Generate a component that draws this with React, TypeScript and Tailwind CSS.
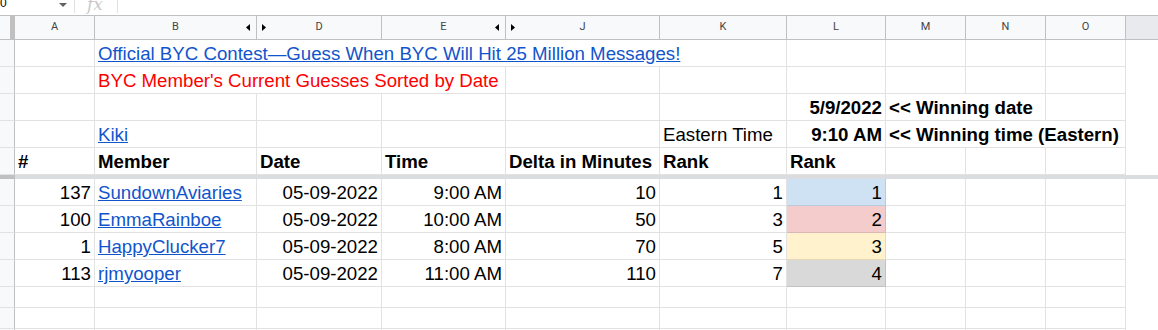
import React from 'react';

type C = {
  t?: string;
  r?: boolean;
  b?: boolean;
  link?: boolean;
  red?: boolean;
  span?: string;
  bg?: string;
};

const GRID =
  'grid grid-cols-[15px_80px_162px_125px_124px_154px_127px_99px_80px_80px_80px_1fr]';

const top: C[][] = [
  [
    {},
    { t: 'Official BYC Contest\u2014Guess When BYC Will Hit 25 Million Messages!', link: true, span: 'col-span-5' },
    {},
    {},
    {},
    {},
  ],
  [
    {},
    { t: "BYC Member's Current Guesses Sorted by Date", red: true, span: 'col-span-3' },
    {},
    {},
    {},
    {},
    {},
    {},
  ],
  [
    {},
    {},
    {},
    {},
    {},
    {},
    { t: '5/9/2022', r: true, b: true },
    { t: '<< Winning date', b: true, span: 'col-span-2' },
    {},
  ],
  [
    {},
    { t: 'Kiki', link: true },
    {},
    {},
    {},
    { t: 'Eastern Time' },
    { t: '9:10 AM', r: true, b: true },
    { t: '<< Winning time (Eastern)', b: true, span: 'col-span-3' },
  ],
  [
    { t: '#', b: true },
    { t: 'Member', b: true },
    { t: 'Date', b: true },
    { t: 'Time', b: true },
    { t: 'Delta in Minutes', b: true },
    { t: 'Rank', b: true },
    { t: 'Rank', b: true },
    {},
    {},
    {},
  ],
];

const guesses = [
  { n: '137', member: 'SundownAviaries', date: '05-09-2022', time: '9:00 AM', delta: '10', rank: '1', r2: '1', bg: 'bg-[#cfe2f3]' },
  { n: '100', member: 'EmmaRainboe', date: '05-09-2022', time: '10:00 AM', delta: '50', rank: '3', r2: '2', bg: 'bg-[#f4cccc]' },
  { n: '1', member: 'HappyClucker7', date: '05-09-2022', time: '8:00 AM', delta: '70', rank: '5', r2: '3', bg: 'bg-[#fff2cc]' },
  { n: '113', member: 'rjmyooper', date: '05-09-2022', time: '11:00 AM', delta: '110', rank: '7', r2: '4', bg: 'bg-[#d9d9d9]' },
];

const headers = ['A', 'B', 'D', 'E', 'J', 'K', 'L', 'M', 'N', 'O'];
// columns next to a hidden one get the little arrows
const hiddenAfter: Record<string, boolean> = { B: true, E: true };
const hiddenBefore: Record<string, boolean> = { D: true, J: true };

function Cell({ c, h }: { c: C; h: string }) {
  const color = c.link ? 'text-[#1155cc] underline' : c.red ? 'text-[#ff0000]' : 'text-black';
  return (
    <div
      className={`${c.span ?? ''} ${h} ${c.bg ?? 'bg-white'} ${
        c.bg ? 'border-black/10' : 'border-[#e2e2e3]'
      } border-r border-b flex items-end pb-[2px] px-[3px] whitespace-nowrap overflow-visible ${
        c.r ? 'justify-end' : 'justify-start'
      }`}
    >
      {c.t && (
        <span className={`leading-[21px] text-[18.67px] ${c.b ? 'font-bold' : ''} ${color}`}>{c.t}</span>
      )}
    </div>
  );
}

function RowHead({ h }: { h: string }) {
  return <div className={`${h} bg-[#f8f9fa] border-r border-b border-r-[#c0c0c0] border-b-[#e2e2e3]`} />;
}

export default function App() {
  return (
    <div className="w-[1158px] h-[330px] overflow-hidden bg-white font-['Liberation_Sans',Arial,sans-serif]">
      {/* formula bar, cropped at the top */}
      <div className="h-[16px] border-b border-[#c0c0c0] flex items-start">
        <span className="w-[6px] text-[12px] leading-[12px] -mt-[3px] text-black">0</span>
        <svg className="ml-[53px] mt-[3px]" width="8" height="4" viewBox="0 0 8 4">
          <path d="M0 0h8L4 4z" fill="#5f6368" />
        </svg>
        <div className="ml-[7px] w-px h-[13px] bg-[#e0e0e0]" />
        <span className="ml-[12px] -mt-[4px] text-[17px] italic text-[#c8c8c8] font-['DejaVu_Serif',serif] leading-[17px]">
          fx
        </span>
        <div className="ml-[14px] w-px h-[13px] bg-[#e0e0e0]" />
      </div>

      <div className={GRID}>
        {/* column header row */}
        <div className="h-[24px] bg-[#f8f9fa] border-r-[5px] border-b border-[#c0c0c0]" />
        {headers.map((l) => (
          <div
            key={l}
            className="h-[24px] bg-[#f8f9fa] border-r border-b border-[#c0c0c0] relative flex items-center justify-center text-[11px] text-[#444] font-['Roboto',sans-serif]"
          >
            {l}
            {hiddenAfter[l] && (
              <svg className="absolute right-[6px] top-[8px]" width="4" height="7" viewBox="0 0 4 7">
                <path d="M4 0v7L0 3.5z" fill="#000" />
              </svg>
            )}
            {hiddenBefore[l] && (
              <svg className="absolute left-[5px] top-[8px]" width="4" height="7" viewBox="0 0 4 7">
                <path d="M0 0v7l4-3.5z" fill="#000" />
              </svg>
            )}
          </div>
        ))}
        <div className="h-[24px] bg-[#e8eaed] border-b border-[#c0c0c0]" />

        {top.map((row, i) => (
          <React.Fragment key={i}>
            <RowHead h="h-[27px]" />
            {row.map((c, j) => (
              <Cell key={j} c={c} h="h-[27px]" />
            ))}
            <div className="h-[27px] bg-white" />
          </React.Fragment>
        ))}

        {/* frozen rows divider */}
        <div className="h-[4px] bg-[#c0c0c0]" />
        <div className="col-span-11 h-[4px] bg-[#dadce0]" />

        {guesses.map((g) => {
          const cells: C[] = [
            { t: g.n, r: true },
            { t: g.member, link: true },
            { t: g.date, r: true },
            { t: g.time, r: true },
            { t: g.delta, r: true },
            { t: g.rank, r: true },
            { t: g.r2, r: true, bg: g.bg },
            {},
            {},
            {},
          ];
          return (
            <React.Fragment key={g.member}>
              <RowHead h="h-[27px]" />
              {cells.map((c, j) => (
                <Cell key={j} c={c} h="h-[27px]" />
              ))}
              <div className="h-[27px] bg-white" />
            </React.Fragment>
          );
        })}

        {[0, 1, 2].map((k) => (
          <React.Fragment key={k}>
            <RowHead h="h-[21px]" />
            {headers.map((l) => (
              <Cell key={l} c={{}} h="h-[21px]" />
            ))}
            <div className="h-[21px] bg-white" />
          </React.Fragment>
        ))}
      </div>
    </div>
  );
}
